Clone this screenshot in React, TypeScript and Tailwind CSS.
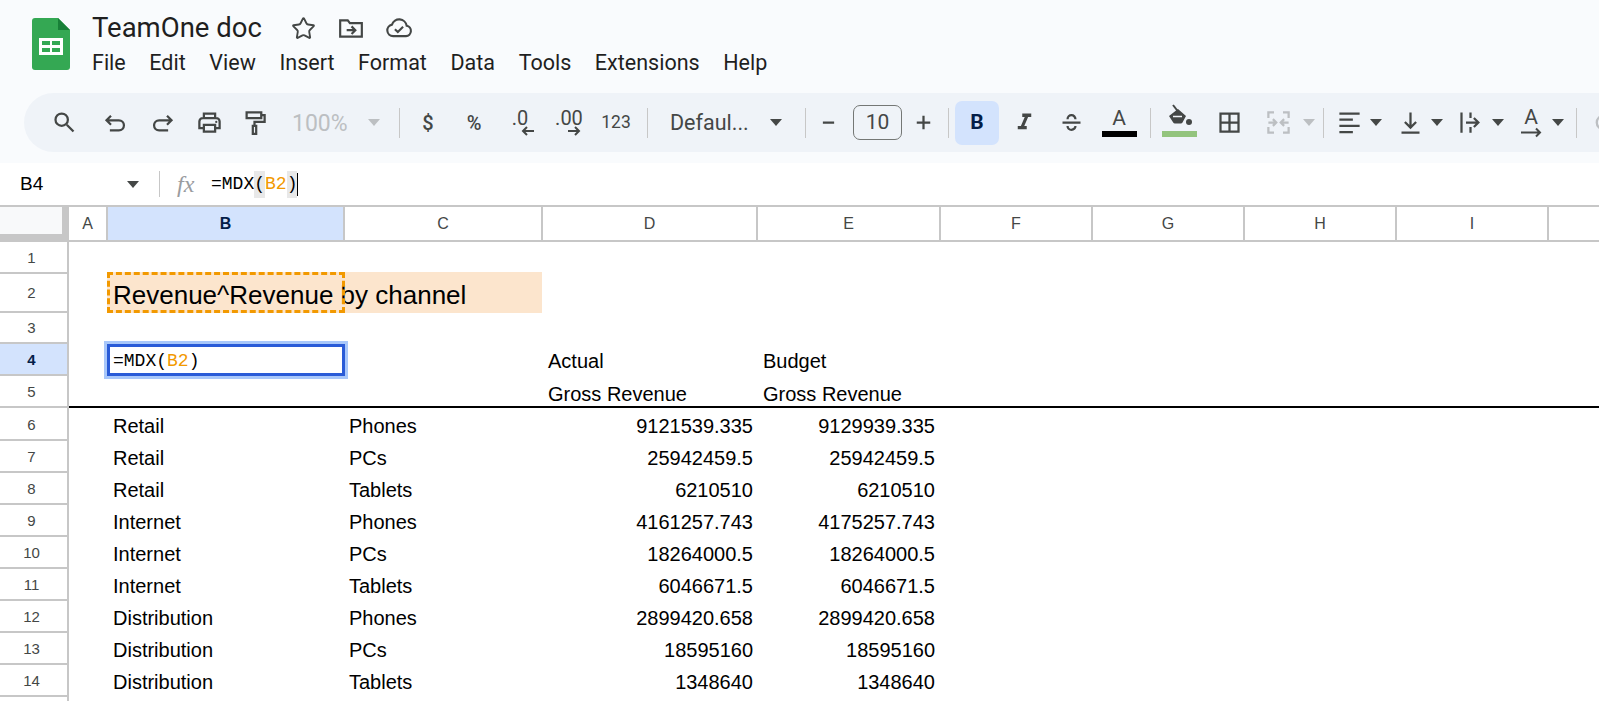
import { ReactNode } from 'react';
import { Star } from 'lucide-react';

const MENU = ['File', 'Edit', 'View', 'Insert', 'Format', 'Data', 'Tools', 'Extensions', 'Help'];
const COLUMNS = ['C', 'D', 'E', 'F', 'G', 'H', 'I', ''];
const HEAD_GRID = 'grid grid-cols-[69px_39px_237px_198px_215px_183px_152px_152px_152px_152px_1fr]';
const GRID = 'grid grid-cols-[69px_38px_237px_198px_215px_183px_152px_152px_152px_152px_1fr]';

const DATA = [
  ['Retail', 'Phones', '9121539.335', '9129939.335'],
  ['Retail', 'PCs', '25942459.5', '25942459.5'],
  ['Retail', 'Tablets', '6210510', '6210510'],
  ['Internet', 'Phones', '4161257.743', '4175257.743'],
  ['Internet', 'PCs', '18264000.5', '18264000.5'],
  ['Internet', 'Tablets', '6046671.5', '6046671.5'],
  ['Distribution', 'Phones', '2899420.658', '2899420.658'],
  ['Distribution', 'PCs', '18595160', '18595160'],
  ['Distribution', 'Tablets', '1348640', '1348640'],
];

function Icon({ children, className = '' }: { children: ReactNode; className?: string }) {
  return (
    <div className={`flex h-9 w-9 shrink-0 items-center justify-center text-[#444746] ${className}`}>
      <svg width="27" height="27" viewBox="0 0 24 24" fill="none" stroke="currentColor" strokeWidth="2">
        {children}
      </svg>
    </div>
  );
}

function Caret({ className = '', muted = false }: { className?: string; muted?: boolean }) {
  return (
    <svg width="12" height="7" viewBox="0 0 12 7" className={`shrink-0 ${muted ? 'text-[#bcbfc2]' : 'text-[#444746]'} ${className}`}>
      <path d="M0 0h12L6 7z" fill="currentColor" />
    </svg>
  );
}

function Sep({ className = '' }: { className?: string }) {
  return <div className={`h-[30px] w-px shrink-0 bg-[#c7c7c7] ${className}`} />;
}

function SheetsLogo() {
  return (
    <svg width="38" height="52" viewBox="0 0 38 52" className="shrink-0">
      <path d="M3 0h23l12 12v37a3 3 0 0 1-3 3H3a3 3 0 0 1-3-3V3a3 3 0 0 1 3-3z" fill="#34a853" />
      <path d="M26 0l12 12H26z" fill="#188038" />
      <path d="M7 20h24v17H7zM10 23v4h8v-4zM20 23v4h8v-4zM10 30v4h8v-4zM20 30v4h8v-4z" fill="#fff" fillRule="evenodd" />
    </svg>
  );
}

function TitleBar() {
  return (
    <div className="flex h-[93px] items-start pl-8 pt-[18px]">
      <SheetsLogo />
      <div className="ml-[22px] -mt-[10px]">
        <div className="flex h-10 items-center">
          <span className="font-['Roboto',sans-serif] text-[27.5px] text-[#1f1f1f]">TeamOne doc</span>
          <Star className="ml-[29px] h-[25px] w-[25px] text-[#444746]" strokeWidth={1.8} />
          <svg width="26" height="26" viewBox="0 0 24 24" fill="none" stroke="#444746" strokeWidth="2" className="ml-[22px]">
            <path d="M2 5h7l2 2.500h11V20H2z" />
            <path d="M8 14h7M12.500 10.500l3.500 3.500-3.500 3.500" />
          </svg>
          <svg width="28" height="28" viewBox="0 0 24 24" fill="none" stroke="#444746" strokeWidth="1.8" className="ml-[21px]">
            <path d="M18 19H7a5 5 0 0 1-1-9.900 6.500 6.500 0 0 1 12.600 1A4.500 4.500 0 0 1 18 19z" />
            <path d="M8.500 13l2.500 2.500 4.500-4.500" />
          </svg>
        </div>
        <div className="mt-px flex gap-[23.6px] font-['Roboto',sans-serif] text-[21.5px] leading-7 text-[#1f1f1f]">
          {MENU.map((item) => (
            <span key={item}>{item}</span>
          ))}
        </div>
      </div>
    </div>
  );
}

function Toolbar() {
  return (
    <div className="ml-6 flex h-[59px] items-center overflow-hidden rounded-l-[30px] bg-[#eff3f8] pl-[22px] font-['Roboto',sans-serif] text-[#444746]">
      <Icon>
        <circle cx="9.500" cy="9.500" r="5.500" />
        <path d="M14 14l6 6" />
      </Icon>
      <Icon className="ml-[15px]">
        <path d="M8 6L4 10l4 4M4 10h11a4.500 4.500 0 0 1 0 9H7" />
      </Icon>
      <Icon className="ml-[11px]">
        <path d="M16 6l4 4-4 4M20 10H9a4.500 4.500 0 0 0 0 9h8" />
      </Icon>
      <Icon className="ml-[11px]">
        <path d="M7 8V4h10v4M6.500 17H3v-6a3 3 0 0 1 3-3h12a3 3 0 0 1 3 3v6h-3.500M7 14h10v6H7z" />
        <circle cx="18" cy="11.500" r="1" fill="currentColor" stroke="none" />
      </Icon>
      <Icon className="ml-[9px]">
        <path d="M5 3h13v5H5zM18 5.500h3v6h-9v3.500M10.500 15h3v7h-3z" />
      </Icon>
      <span className="ml-[20px] mt-[3px] w-[55px] shrink-0 text-[23px] text-[#bcbfc2]">100%</span>
      <Caret muted className="ml-[21px]" />
      <Sep className="ml-[19px]" />
      <span className="ml-[10px] w-9 shrink-0 text-center text-[20px] font-medium">$</span>
      <span className="ml-[10px] w-9 shrink-0 text-center text-[20px] font-medium">%</span>
      <div className="relative ml-[10px] flex h-9 w-9 shrink-0 flex-col items-center">
        <span className="mt-px text-[20px] leading-[24px]">.0</span>
        <svg width="14" height="10" viewBox="0 0 14 10" fill="none" stroke="currentColor" strokeWidth="2" className="absolute right-[3px] top-[21px]">
          <path d="M13 5H2M6 1L2 5l4 4" />
        </svg>
      </div>
      <div className="relative ml-[13px] flex h-9 w-9 shrink-0 flex-col items-center">
        <span className="mt-px whitespace-nowrap text-[20px] leading-[24px]">.00</span>
        <svg width="14" height="10" viewBox="0 0 14 10" fill="none" stroke="currentColor" strokeWidth="2" className="absolute right-[6px] top-[21px]">
          <path d="M1 5h11M8 1l4 4-4 4" />
        </svg>
      </div>
      <span className="ml-[11px] w-9 shrink-0 text-center text-[17.5px]">123</span>
      <Sep className="ml-[13px]" />
      <span className="ml-[22px] w-[80px] shrink-0 whitespace-nowrap text-[21.5px] leading-7">Defaul...</span>
      <Caret className="ml-[20px]" />
      <Sep className="ml-[23px]" />
      <Icon className="ml-1">
        <path d="M7 12h10" />
      </Icon>
      <div className="ml-[7px] flex h-[35px] w-[49px] shrink-0 items-center justify-center rounded-[7px] border border-[#747775] text-[21px]">
        10
      </div>
      <Icon className="ml-[3px]">
        <path d="M6 12h12M12 6v12" />
      </Icon>
      <Sep className="ml-[7px]" />
      <div className="ml-[6px] flex h-11 w-11 shrink-0 items-center justify-center rounded-[7px] bg-[#d3e3fd] text-[21px] font-bold text-[#041e49]">
        B
      </div>
      <Icon className="ml-[7px]">
        <path d="M10 4v3h2.210l-3.420 8H6v3h8v-3h-2.210l3.420-8H18V4z" fill="currentColor" stroke="none" />
      </Icon>
      <Icon className="ml-[11px]">
        <path d="M4 12h16M8.500 9a3.500 3.500 0 0 1 7 0M8.500 15a3.500 3.500 0 0 0 7 0" />
      </Icon>
      <div className="ml-3 flex h-9 w-9 shrink-0 flex-col items-center">
        <span className="h-[26px] text-[21px] leading-[26px]">A</span>
        <div className="h-1.5 w-[35px] bg-black" />
      </div>
      <Sep className="ml-[13px]" />
      <div className="ml-[11px] flex h-10 w-[35px] shrink-0 flex-col items-center">
        <svg width="26" height="24" viewBox="0 0 26 24" fill="currentColor">
          <path d="M6 2l7 9" fill="none" stroke="currentColor" strokeWidth="2" />
          <path d="M2 13l9-7 8 7-3.500 6.500a2 2 0 0 1-1.800 1H8a2 2 0 0 1-1.800-1z" />
          <path d="M6 13.500h9" stroke="#eff3f8" strokeWidth="1.500" />
          <circle cx="22" cy="19" r="3" />
        </svg>
        <div className="mt-1 h-1.5 w-[35px] shrink-0 bg-[#93c47d]" />
      </div>
      <Icon className="ml-[14px]">
        <path d="M4 4h16v16H4zM12 4v16M4 12h16" />
      </Icon>
      <Icon className="ml-[13px] text-[#bcbfc2]">
        <path d="M8 3H3v5M16 3h5v5M8 21H3v-5M16 21h5v-5M3 12h6M7 9l3 3-3 3M21 12h-6M17 9l-3 3 3 3" />
      </Icon>
      <Caret muted className="ml-[7px]" />
      <Sep className="ml-2" />
      <Icon className="ml-[7px]">
        <path d="M3 4h18M3 9.500h12M3 15h18M3 20.500h12" />
      </Icon>
      <Caret className="ml-[3px]" />
      <Icon className="ml-[10px]">
        <path d="M4 21h16M12 3v13M7 11.500l5 5 5-5" />
      </Icon>
      <Caret className="ml-[3px]" />
      <Icon className="ml-[9px]">
        <path d="M4 3v18M12 3v5M12 16v5M8 12h11M15 8l4 4-4 4" />
      </Icon>
      <Caret className="ml-1" />
      <div className="ml-[9px] flex h-9 w-9 shrink-0 flex-col items-center">
        <span className="h-[22px] text-[21px] leading-[24px]">A</span>
        <svg width="22" height="11" viewBox="0 0 22 11" fill="none" stroke="currentColor" strokeWidth="2">
          <path d="M1 5.500h19M16 1.500l4 4-4 4" />
        </svg>
      </div>
      <Caret className="ml-[3px]" />
      <Sep className="ml-3" />
      <Icon className="ml-2 text-[#bcbfc2]">
        <circle cx="12" cy="12" r="6" />
      </Icon>
    </div>
  );
}

function FormulaBar() {
  return (
    <div className="mt-[11px] flex h-[42px] items-center bg-white">
      <span className="ml-5 w-[104px] font-['Liberation_Sans',sans-serif] text-[19px] text-black">B4</span>
      <Caret className="ml-[3px]" />
      <div className="ml-5 h-[26px] w-px bg-[#c7c7c7]" />
      <span className="ml-[17px] w-[25px] font-['Liberation_Serif',serif] text-[24px] italic text-[#9a9c9f]">fx</span>
      <div className="ml-[9px] flex h-[26px] items-center font-['Liberation_Mono',monospace] text-[18px] text-black">
        =MDX<span className="bg-[#e8e8e8]">(</span>
        <span className="text-[#f29900]">B2</span>
        <span className="bg-[#e8e8e8]">)</span>
        <span className="h-[23px] w-px bg-black" />
      </div>
    </div>
  );
}

function ColumnHeader() {
  return (
    <div className={`${HEAD_GRID} h-[37px] border-y-2 border-[#c7c7c7] font-['Liberation_Sans',sans-serif] text-[16px] text-[#444746]`}>
      <div className="bg-[#c7c7c7]">
        <div className="h-[27px] w-[62px] bg-[#f8f9fa]" />
      </div>
      <div className="flex items-center justify-center border-r-2 border-[#c7c7c7]">A</div>
      <div className="flex items-center justify-center border-r-2 border-[#c7c7c7] bg-[#d3e3fd] font-bold text-[#041e49]">B</div>
      {COLUMNS.map((c) => (
        <div key={c} className="flex items-center justify-center border-r-2 border-[#c7c7c7] last:border-r-0">
          {c}
        </div>
      ))}
    </div>
  );
}

function RowHeader({ n, active = false }: { n?: number; active?: boolean }) {
  return (
    <div
      className={`flex items-center justify-center border-b-2 border-r-2 border-[#c7c7c7] pr-1 pt-[2px] text-[15px] leading-5 ${
        active ? 'bg-[#d3e3fd] font-bold text-[#041e49]' : 'text-[#444746]'
      }`}
    >
      {n}
    </div>
  );
}

function Sheet() {
  return (
    <div className="font-['Liberation_Sans',sans-serif] text-[20px] leading-[30px] text-black">
      <div className={`${GRID} h-[31.5px]`}>
        <RowHeader n={1} />
      </div>
      <div className={`${GRID} h-[39px]`}>
        <RowHeader n={2} />
        <div />
        <div className="relative col-span-2 -mt-[2px] flex items-end whitespace-nowrap bg-[#fce5cd] pb-[2px] pl-1.5 text-[26px] leading-8">
          Revenue^Revenue by channel
          <div className="absolute bottom-0 left-0 top-0 w-[238px] border-[3px] border-dashed border-[#f29900]" />
        </div>
      </div>
      <div className={`${GRID} h-[31.5px]`}>
        <RowHeader n={3} />
      </div>
      <div className={`${GRID} h-8`}>
        <RowHeader n={4} active />
        <div />
        <div className="relative flex items-center pl-1.5 pt-px font-['Liberation_Mono',monospace] text-[18px]">
          =MDX(<span className="text-[#f29900]">B2</span>)
          <div className="absolute -right-px bottom-0 left-0 top-0 border-[3px] border-[#2a5bd7] shadow-[0_0_0_3px_#a8c7fa]" />
        </div>
        <div />
        <div className="flex items-end pl-1.5">Actual</div>
        <div className="flex items-end pl-1.5">Budget</div>
      </div>
      <div className={`${GRID} h-8 grid-rows-[32px]`}>
        <RowHeader n={5} />
        <div className="col-span-10 h-8 border-b-2 border-black">
          <div className="grid h-[30px] grid-cols-[38px_237px_198px_215px_183px]">
            <div className="col-span-3" />
            <div className="whitespace-nowrap pl-1.5 pt-[3px]">Gross Revenue</div>
            <div className="whitespace-nowrap pl-1.5 pt-[3px]">Gross Revenue</div>
          </div>
        </div>
      </div>
      {DATA.map((row, i) => (
        <div key={i} className={`${GRID} h-8`}>
          <RowHeader n={i + 6} />
          <div />
          <div className="flex items-center pl-1.5 pt-[3px]">{row[0]}</div>
          <div className="flex items-center pl-[5px] pt-[3px]">{row[1]}</div>
          <div className="flex items-center justify-end pr-1 pt-[3px]">{row[2]}</div>
          <div className="flex items-center justify-end pr-[5px] pt-[3px]">{row[3]}</div>
        </div>
      ))}
      <div className={`${GRID} h-8`}>
        <RowHeader />
      </div>
    </div>
  );
}

export default function App() {
  return (
    <div className="h-[701px] overflow-hidden bg-[#f9fbfd]">
      <TitleBar />
      <Toolbar />
      <FormulaBar />
      <div className="bg-white">
        <ColumnHeader />
        <Sheet />
      </div>
    </div>
  );
}
